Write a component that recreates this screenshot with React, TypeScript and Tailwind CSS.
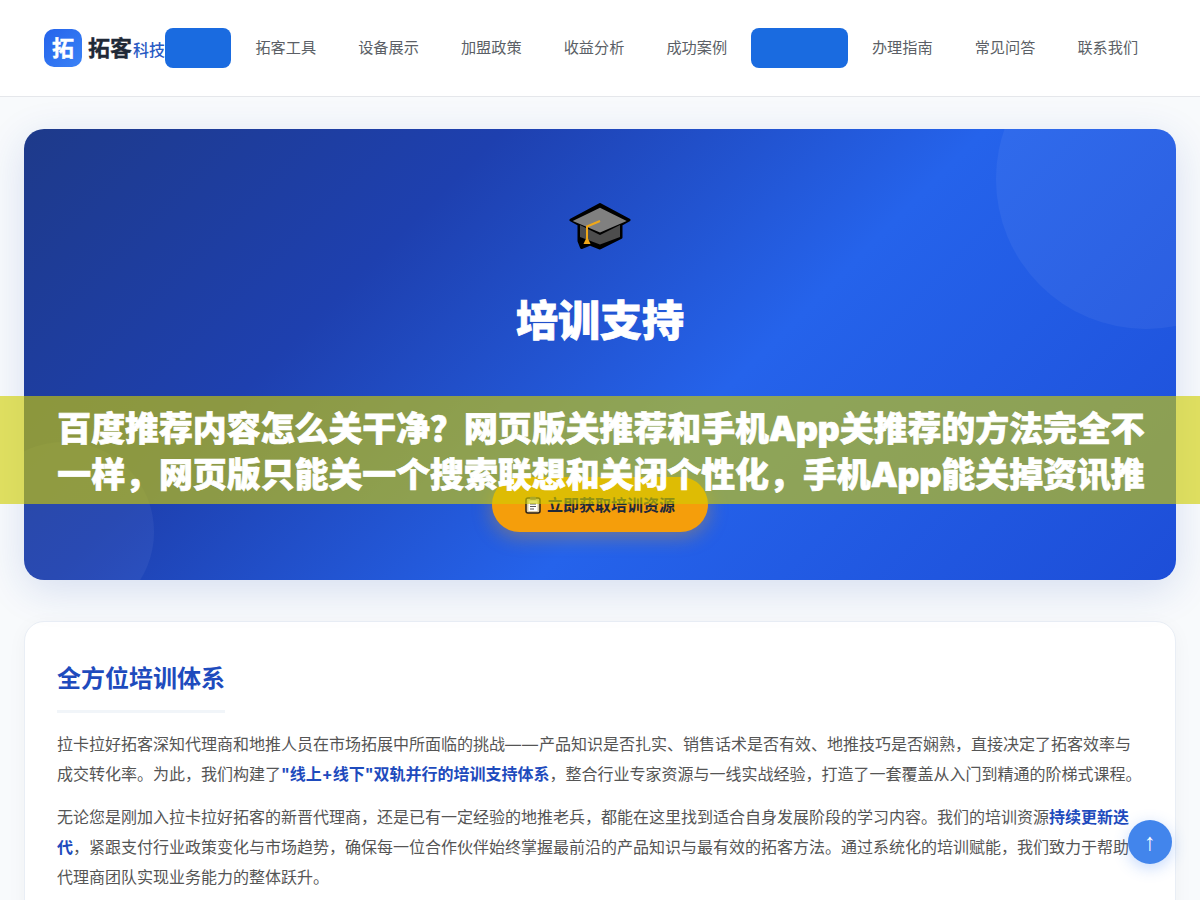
const font = `font-['Inter','Noto_Sans_CJK_SC',sans-serif]`

const navItems = ['拓客工具', '设备展示', '加盟政策', '收益分析', '成功案例']
const navItemsRight = ['办理指南', '常见问答', '联系我们']

function CapIcon() {
  return (
    <svg width="62" height="47" viewBox="0 0 62 47" fill="none">
      <path d="M31 1.5 60 17 52 21.5V34.5L31 45 21 41 12.5 44.5 10 38V21.5L2 17Z" fill="#000" stroke="#000" strokeWidth="3" strokeLinejoin="round" />
      <path d="M11 22 31 32 51 22V34L31 41.5 11 34Z" fill="#4d4d4d" />
      <path d="M31 4.7 57.7 18 31 29.5 3.7 18Z" fill="#808080" />
      <path d="M31 18 18 23.5V36" stroke="#f0a818" strokeWidth="2" />
      <path d="M18 33.5 21.5 41H14.5Z" fill="#f0a818" />
    </svg>
  )
}

function ClipboardIcon() {
  return (
    <svg width="16" height="18" viewBox="0 0 16 18" fill="none">
      <rect x="1" y="2" width="14" height="15" rx="2" fill="#d9c9a3" stroke="#2b2118" strokeWidth="1.5" />
      <rect x="3.5" y="4.5" width="9" height="10.5" fill="#fff" />
      <rect x="5" y="0.8" width="6" height="3" rx="1" fill="#6b6b6b" />
      <path d="M5 8h6M5 10.5h6M5 13h4" stroke="#555" strokeWidth="1" />
    </svg>
  )
}

function NavLink({ label }: { label: string }) {
  return (
    <a className="flex h-10 items-center whitespace-nowrap rounded-lg px-[18px] text-[15.2px] text-[#5b5f66]">
      {label}
    </a>
  )
}

function ActiveLink({ label }: { label: string }) {
  return (
    <a className="flex h-10 items-center whitespace-nowrap rounded-lg bg-[#1a6be0] px-[18px] text-[15.2px] text-[#1a6be0]">
      {label}
    </a>
  )
}

export default function App() {
  return (
    <div className={`relative h-[900px] overflow-hidden bg-[#f8fafc] ${font}`}>
      <header className="flex h-[97px] items-center justify-between border-b border-[#e5e7eb] bg-white px-11">
        <div className="flex items-center gap-[6px]">
          <div className="flex h-[38px] w-[38px] items-center justify-center rounded-[10px] bg-gradient-to-br from-[#2563eb] to-[#3b82f6] text-[22px] font-bold text-white [-webkit-text-stroke:0.4px_white]">
            拓
          </div>
          <div className="flex items-baseline whitespace-nowrap">
            <span className="text-[22px] font-bold text-[#1f2937] [-webkit-text-stroke:0.3px_#1f2937]">拓客</span>
            <span className="ml-[1px] text-[16px] font-medium text-[#2a5bc4]">科技</span>
          </div>
        </div>
        <nav className="flex shrink-0 items-center gap-[6px]">
          <ActiveLink label="首页" />
          {navItems.map((n) => (
            <NavLink key={n} label={n} />
          ))}
          <ActiveLink label="培训支持" />
          {navItemsRight.map((n) => (
            <NavLink key={n} label={n} />
          ))}
        </nav>
      </header>

      <main className="px-6 pt-8">
        <section className="relative flex h-[451px] flex-col items-center overflow-hidden rounded-[20px] bg-[linear-gradient(135deg,#1e3a8a_0%,#1e40af_30%,#2563eb_60%,#1d4ed8_100%)] pt-[74px] shadow-[0_10px_40px_rgba(30,64,175,0.15)]">
          <div className="absolute -right-[120px] -top-[100px] h-[300px] w-[300px] rounded-full bg-white/5" />
          <div className="absolute -bottom-[42px] -left-[50px] h-[180px] w-[180px] rounded-full bg-white/5" />
          <CapIcon />
          <h1 className="mt-[39px] text-[42px] leading-[64px] font-black text-white [-webkit-text-stroke:0.8px_white]">培训支持</h1>
          <a className="absolute bottom-[48px] flex h-[55px] items-center gap-[6px] rounded-full bg-[#f59e0b] px-[33px] text-[16px] font-bold text-[#1e293b] shadow-[0_4px_20px_rgba(245,158,11,0.4)]">
            <ClipboardIcon />
            立即获取培训资源
          </a>
        </section>

        <section className="mt-[41px] h-[400px] rounded-[20px] border border-[#e9eef5] bg-white px-8 pt-[39px] shadow-[0_4px_20px_rgba(0,0,0,0.04)]">
          <h2 className="inline-block border-b-[3px] border-[#f1f5f9] pb-[13px] text-[24px] leading-[36px] font-bold text-[#1e4bbd]">
            全方位培训体系
          </h2>
          <p className="mt-4 text-[16px] leading-[30px] text-[#555]">
            拉卡拉好拓客深知代理商和地推人员在市场拓展中所面临的挑战<span className="tracking-[1px]">——</span>产品知识是否扎实、销售话术是否有效、地推技巧是否娴熟，直接决定了拓客效率与成交转化率。为此，我们构建了<strong className="text-[#1e4bbd]">"线上+线下"双轨并行的培训支持体系</strong>，整合行业专家资源与一线实战经验，打造了一套覆盖从入门到精通的阶梯式课程。
          </p>
          <p className="mt-[13px] text-[16px] leading-[30px] text-[#555]">
            无论您是刚加入拉卡拉好拓客的新晋代理商，还是已有一定经验的地推老兵，都能在这里找到适合自身发展阶段的学习内容。我们的培训资源<strong className="text-[#1e4bbd]">持续更新迭代</strong>，紧跟支付行业政策变化与市场趋势，确保每一位合作伙伴始终掌握最前沿的产品知识与最有效的拓客方法。通过系统化的培训赋能，我们致力于帮助代理商团队实现业务能力的整体跃升。
          </p>
        </section>
      </main>

      <div className="absolute inset-x-0 top-[396px] flex h-[108px] flex-col items-center justify-center bg-[rgba(209,206,0,0.62)] pl-[2px] pt-1 text-[33.9px] leading-[46px] font-black text-white [-webkit-text-stroke:0.7px_white]">
        <div className="whitespace-nowrap">百度推荐内容怎么关干净？网页版关推荐和手机App关推荐的方法完全不</div>
        <div className="whitespace-nowrap">一样，网页版只能关一个搜索联想和关闭个性化，手机App能关掉资讯推</div>
      </div>

      <button className="absolute left-[1128px] top-[820px] flex h-11 w-11 items-center justify-center rounded-full bg-[#4285ec] font-['Liberation_Sans'] text-[24px] text-white shadow-[0_4px_15px_rgba(59,130,246,0.3)]">
        ↑
      </button>
    </div>
  )
}
